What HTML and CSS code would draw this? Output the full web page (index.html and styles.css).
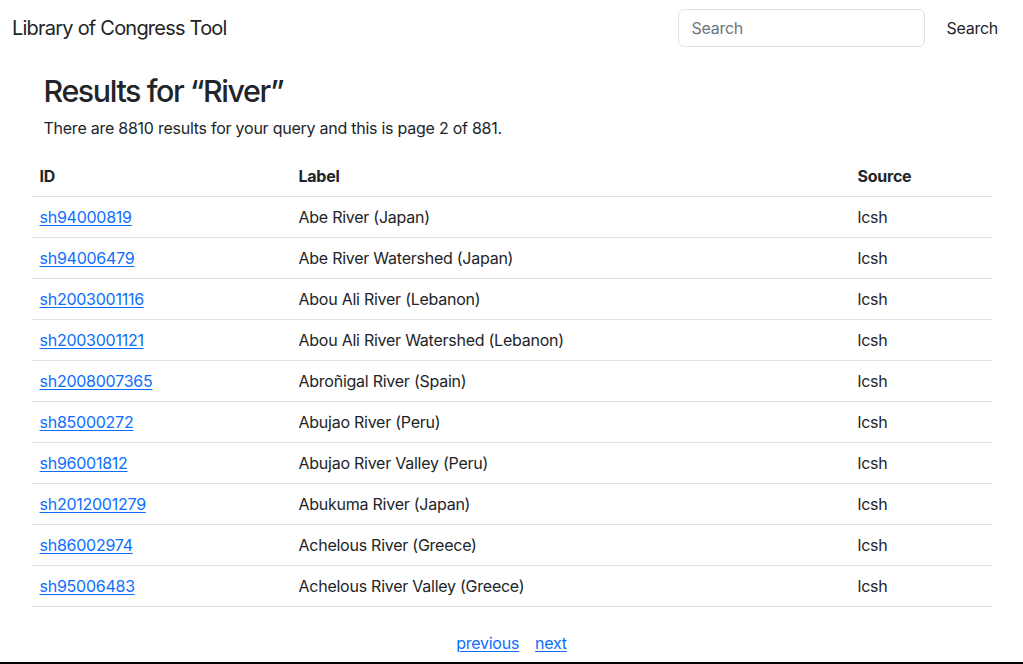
FILE: index.html
```html
<!DOCTYPE html>
<html lang="en">
<head>
<meta charset="utf-8">
<title>Library of Congress Tool</title>
<link rel="stylesheet" href="styles.css">
</head>
<body>
<div class="page">
  <nav class="navbar">
    <a class="brand" href="#">Library of Congress Tool</a>
    <form class="search-form">
      <input class="search-input" type="search" placeholder="Search">
      <button class="search-btn" type="button">Search</button>
    </form>
  </nav>
  <main class="container">
    <h2 class="title">Results for “River”</h2>
    <p class="summary">There are 8810 results for your query and this is page 2 of 881.</p>
    <table class="results">
      <thead>
        <tr><th class="col-id">ID</th><th class="col-label">Label</th><th class="col-source">Source</th></tr>
      </thead>
      <tbody>
        <tr><td><a href="#">sh94000819</a></td><td>Abe River (Japan)</td><td>lcsh</td></tr>
        <tr><td><a href="#">sh94006479</a></td><td>Abe River Watershed (Japan)</td><td>lcsh</td></tr>
        <tr><td><a href="#">sh2003001116</a></td><td>Abou Ali River (Lebanon)</td><td>lcsh</td></tr>
        <tr><td><a href="#">sh2003001121</a></td><td>Abou Ali River Watershed (Lebanon)</td><td>lcsh</td></tr>
        <tr><td><a href="#">sh2008007365</a></td><td>Abroñigal River (Spain)</td><td>lcsh</td></tr>
        <tr><td><a href="#">sh85000272</a></td><td>Abujao River (Peru)</td><td>lcsh</td></tr>
        <tr><td><a href="#">sh96001812</a></td><td>Abujao River Valley (Peru)</td><td>lcsh</td></tr>
        <tr><td><a href="#">sh2012001279</a></td><td>Abukuma River (Japan)</td><td>lcsh</td></tr>
        <tr><td><a href="#">sh86002974</a></td><td>Achelous River (Greece)</td><td>lcsh</td></tr>
        <tr><td><a href="#">sh95006483</a></td><td>Achelous River Valley (Greece)</td><td>lcsh</td></tr>
      </tbody>
    </table>
    <div class="pager">
      <a href="#">previous</a>
      <a href="#">next</a>
    </div>
  </main>
  <footer class="footer"></footer>
</div>
</body>
</html>
```
FILE: styles.css
```css
* { box-sizing: border-box; }
html, body { margin: 0; padding: 0; }
body {
  font-family: Inter, "Liberation Sans", Arial, sans-serif;
  font-size: 16px;
  line-height: 1.5;
  letter-spacing: -0.25px;
  color: #212529;
  background: #fff;
}
.page {
  min-height: 664px;
  display: flex;
  flex-direction: column;
}
a { color: #0d6efd; text-decoration: underline; text-underline-offset: 2px; }

.navbar {
  display: flex;
  align-items: center;
  justify-content: space-between;
  height: 56px;
  padding: 8px 12px;
}
.brand {
  color: #212529;
  text-decoration: none;
  font-size: 20px;
  line-height: 30px;
  letter-spacing: -0.78px;
  padding: 5px 0;
}
.search-form {
  display: flex;
  align-items: center;
  gap: 8px;
}
.search-input {
  width: 247px;
  height: 38px;
  padding: 6px 12px;
  font: inherit;
  letter-spacing: inherit;
  color: #212529;
  border: 1px solid #dee2e6;
  border-radius: 6px;
  outline: none;
}
.search-input::placeholder { color: #6c757d; }
.search-btn {
  font: inherit;
  letter-spacing: inherit;
  color: #212529;
  background: transparent;
  border: 1px solid transparent;
  padding: 6px 12px;
  border-radius: 6px;
}

.container {
  width: 960px;
  margin: 17px auto 0;
  flex: 1;
}
.title {
  margin: 0 12px 7px;
  font-size: 30.4px;
  font-weight: 500;
  line-height: 1.2;
  letter-spacing: -1.4px;
}
.summary {
  margin: 0 12px 16px;
}
.results {
  width: 100%;
  border-collapse: collapse;
}
.results th, .results td {
  text-align: left;
  padding: 8px;
  border-bottom: 1px solid #dee2e6;
  vertical-align: top;
}
.results th { font-weight: 700; }
.col-id { width: 259px; }
.col-label { width: 559px; }
.pager {
  margin-top: 24px;
  display: flex;
  justify-content: center;
  gap: 16px;
}
.footer {
  height: 2px;
  background: #000;
}
```
